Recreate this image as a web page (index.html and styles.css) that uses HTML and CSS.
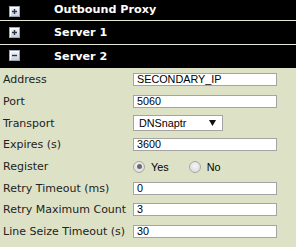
FILE: index.html
```html
<!DOCTYPE html>
<html>
<head>
<meta charset="utf-8">
<link rel="stylesheet" href="styles.css">
</head>
<body>
<div class="panel">
  <div class="hdr hdr-first">
    <span class="tog"><svg width="11" height="11" viewBox="0 0 11 11"><path d="M3 5.5h5M5.5 3v5" stroke="#2c3440" stroke-width="1.4"/></svg></span>
    <span class="title">Outbound Proxy</span>
  </div>
  <div class="hdr">
    <span class="tog"><svg width="11" height="11" viewBox="0 0 11 11"><path d="M3 5.5h5M5.5 3v5" stroke="#2c3440" stroke-width="1.4"/></svg></span>
    <span class="title">Server 1</span>
  </div>
  <div class="hdr hdr-last">
    <span class="tog"><svg width="11" height="11" viewBox="0 0 11 11"><path d="M3 5.5h5" stroke="#2c3440" stroke-width="1.4"/></svg></span>
    <span class="title">Server 2</span>
  </div>
  <div class="form">
    <div class="lbl">Address</div>
    <div class="fld"><span class="inp">SECONDARY_IP</span></div>
    <div class="lbl">Port</div>
    <div class="fld"><span class="inp">5060</span></div>
    <div class="lbl">Transport</div>
    <div class="fld"><span class="sel"><span class="sel-txt">DNSnaptr</span><svg class="arrow" width="7" height="6" viewBox="0 0 7 6"><path d="M0 0h7L3.5 6z" fill="#111"/></svg></span></div>
    <div class="lbl">Expires (s)</div>
    <div class="fld"><span class="inp">3600</span></div>
    <div class="lbl">Register</div>
    <div class="fld radios">
      <span class="radio on"></span><span class="rlbl">Yes</span>
      <span class="radio"></span><span class="rlbl">No</span>
    </div>
    <div class="lbl">Retry Timeout (ms)</div>
    <div class="fld"><span class="inp">0</span></div>
    <div class="lbl">Retry Maximum Count</div>
    <div class="fld"><span class="inp">3</span></div>
    <div class="lbl">Line Seize Timeout (s)</div>
    <div class="fld"><span class="inp">30</span></div>
  </div>
</div>
</body>
</html>
```
FILE: styles.css
```css
html, body {
  margin: 0;
  padding: 0;
  background: #dde2c7;
}
.panel {
  width: 296px;
  height: 247px;
  background: #dde2c7;
  overflow: hidden;
}
.hdr {
  height: 23px;
  background: #000;
  border-bottom: 1px solid #e6e8d2;
  display: flex;
  align-items: center;
  position: relative;
}
.hdr-first {
  height: 20px;
}
.hdr-last {
  border-bottom: none;
}
.tog {
  position: absolute;
  left: 9px;
  width: 11px;
  height: 11px;
  box-sizing: border-box;
  border: 1px solid #9aa3b3;
  background: linear-gradient(#f4f6fa, #c9d0dc);
  box-shadow: inset 1px 1px 0 #fff;
  display: flex;
}
.hdr-first .tog { top: 3px; }
.hdr .tog { top: 6px; }
.hdr-last .tog { top: 5px; }
.tog svg {
  margin: -1px;
}
.title {
  margin-left: 54px;
  color: #fff;
  font-family: "DejaVu Sans", Verdana, sans-serif;
  font-weight: bold;
  font-size: 11.2px;
  line-height: 14px;
}
.form {
  display: grid;
  grid-template-columns: 130px 150px;
  grid-auto-rows: 21.7px;
  padding: 1px 0 0 3px;
}
.lbl {
  font-family: "DejaVu Sans", Verdana, sans-serif;
  font-size: 11px;
  color: #222;
  display: flex;
  align-items: center;
  white-space: nowrap;
}
.fld {
  display: flex;
  align-items: center;
  font-family: "Liberation Sans", Arial, sans-serif;
  font-size: 10.8px;
  color: #000;
}
.inp {
  box-sizing: border-box;
  width: 144px;
  height: 13px;
  border: 1px solid #a4a4a4;
  background: #fff;
  padding: 0 3px;
  line-height: 11px;
  display: block;
}
.sel {
  box-sizing: border-box;
  width: 90px;
  height: 16px;
  border: 1px solid #a4a4a4;
  background: #fff;
  display: flex;
  align-items: center;
  padding-left: 5px;
}
.sel-txt {
  flex: 1;
  line-height: 12px;
}
.arrow {
  margin-right: 6px;
}
.radios {
  gap: 0;
}
.radio {
  box-sizing: border-box;
  width: 12px;
  height: 12px;
  border-radius: 50%;
  border: 1px solid #a8a8a8;
  background: radial-gradient(circle at 50% 40%, #f6f6f6, #d6d6d6);
  display: flex;
  align-items: center;
  justify-content: center;
}
.radio.on::after {
  content: "";
  width: 5px;
  height: 5px;
  border-radius: 50%;
  background: #6a6a6a;
}
.rlbl {
  margin-left: 6px;
  margin-right: 20px;
  line-height: 12px;
}
```
